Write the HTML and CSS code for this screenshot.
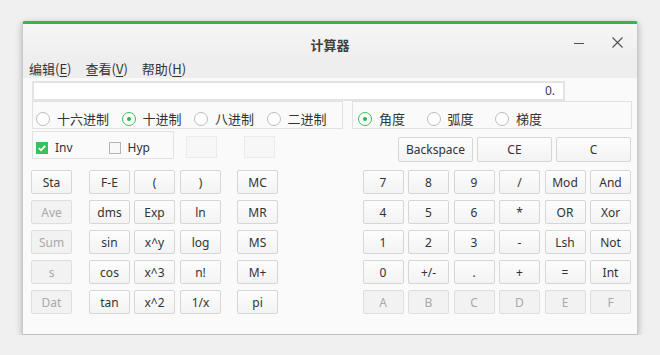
FILE: index.html
```html
<!DOCTYPE html>
<html>
<head>
<meta charset="utf-8">
<title>计算器</title>
<link rel="stylesheet" href="styles.css">
</head>
<body>
<div class="window">
    <div class="titlebar">
        <span></span>
        <span class="title">计算器</span>
        <span class="controls">
            <svg width="10" height="10" viewBox="0 0 10 10"><path d="M0 5.5H10" stroke="#505050" stroke-width="1"/></svg>
            <svg width="11" height="11" viewBox="0 0 11 11"><path d="M0.5 0.5L10.5 10.5M10.5 0.5L0.5 10.5" stroke="#505050" stroke-width="1.1"/></svg>
        </span>
    </div>
    <div class="menubar">
        <span>编辑(<u>E</u>)</span>
        <span>查看(<u>V</u>)</span>
        <span>帮助(<u>H</u>)</span>
    </div>
    <div class="content">
        <div class="display">0.</div>

        <div class="modes">
            <div class="group base">
                <span class="radio"><span class="circle"></span>十六进制</span>
                <span class="radio on"><span class="circle"></span>十进制</span>
                <span class="radio"><span class="circle"></span>八进制</span>
                <span class="radio"><span class="circle"></span>二进制</span>
            </div>
            <div class="group angle">
                <span class="radio on"><span class="circle"></span>角度</span>
                <span class="radio"><span class="circle"></span>弧度</span>
                <span class="radio"><span class="circle"></span>梯度</span>
            </div>
        </div>

        <div class="options">
            <div class="checks">
                <span class="check on"><span class="box"><svg width="12" height="12" viewBox="0 0 12 12"><path d="M2.8 6.2L5 8.3L9.2 3.8" fill="none" stroke="#fff" stroke-width="1.8"/></svg></span>Inv</span>
                <span class="check"><span class="box"></span>Hyp</span>
            </div>
            <span class="blank first"></span>
            <span class="blank"></span>
            <div class="clear">
                <button class="key">Backspace</button>
                <button class="key">CE</button>
                <button class="key">C</button>
            </div>
        </div>

        <div class="keys">
            <div class="sci">
                <button class="key">Sta</button>
                <button class="key">F-E</button>
                <button class="key">(</button>
                <button class="key">)</button>
                <button class="key">MC</button>

                <button class="key off">Ave</button>
                <button class="key">dms</button>
                <button class="key">Exp</button>
                <button class="key">ln</button>
                <button class="key">MR</button>

                <button class="key off">Sum</button>
                <button class="key">sin</button>
                <button class="key">x^y</button>
                <button class="key">log</button>
                <button class="key">MS</button>

                <button class="key off">s</button>
                <button class="key">cos</button>
                <button class="key">x^3</button>
                <button class="key">n!</button>
                <button class="key">M+</button>

                <button class="key off">Dat</button>
                <button class="key">tan</button>
                <button class="key">x^2</button>
                <button class="key">1/x</button>
                <button class="key">pi</button>
            </div>
            <div class="num">
                <button class="key">7</button>
                <button class="key">8</button>
                <button class="key">9</button>
                <button class="key">/</button>
                <button class="key">Mod</button>
                <button class="key">And</button>

                <button class="key">4</button>
                <button class="key">5</button>
                <button class="key">6</button>
                <button class="key">*</button>
                <button class="key">OR</button>
                <button class="key">Xor</button>

                <button class="key">1</button>
                <button class="key">2</button>
                <button class="key">3</button>
                <button class="key">-</button>
                <button class="key">Lsh</button>
                <button class="key">Not</button>

                <button class="key">0</button>
                <button class="key">+/-</button>
                <button class="key">.</button>
                <button class="key">+</button>
                <button class="key">=</button>
                <button class="key">Int</button>

                <button class="key off">A</button>
                <button class="key off">B</button>
                <button class="key off">C</button>
                <button class="key off">D</button>
                <button class="key off">E</button>
                <button class="key off">F</button>
            </div>
        </div>
    </div>
</div>
</body>
</html>
```

FILE: styles.css
```css
/* desktop behind the window */
body {
    margin: 0;
    background-color: #f0f0f0;
    font-family: "Noto Sans", "Noto Sans CJK SC", sans-serif;
    color: #333;
}

.window {
    margin: 21px 0 0 22px;
    width: 614px;
    height: 310px;
    border-top: 3px solid #33b552;
    border-left: 1px solid #c9c9c9;
    border-right: 1px solid #c9c9c9;
    border-bottom: 1px solid #c0c0c0;
    border-radius: 3px 3px 0 0;
    background-color: #fafafa;
    box-shadow: 0 2px 7px rgba(0,0,0,0.28);
    display: flex;
    flex-direction: column;
}

/* title + menu */
.titlebar {
    height: 36px;
    display: grid;
    grid-template-columns: 1fr auto 1fr;
    align-items: center;
    background: linear-gradient(#f6f6f6, #eeeeee);
}
.title {
    font-family: "Noto Sans CJK SC", sans-serif;
    font-weight: bold;
    font-size: 13px;
    color: #404040;
    padding-top: 4px;
}
.controls {
    justify-self: end;
    display: flex;
    align-items: center;
    gap: 28px;
    padding-right: 14px;
    padding-top: 1px;
}

.menubar {
    height: 18px;
    background-color: #eeeeee;
    display: flex;
    gap: 14px;
    padding-left: 6px;
    font-family: "Noto Sans CJK SC", sans-serif;
    font-size: 13px;
    line-height: 18px;
    color: #333;
}
.menubar u {
    text-underline-offset: 2px;
}

.content {
    flex: 1;
    padding: 3px 5px 0 9px;
}

/* read-out */
.display {
    width: 533px;
    height: 20px;
    box-sizing: border-box;
    border: 2px solid #e3e3e3;
    background-color: #fff;
    text-align: right;
    font-size: 12px;
    line-height: 15px;
    padding-right: 8px;
    color: #3a3a5a;
}

/* base & angle radios */
.modes {
    display: flex;
    gap: 9px;
}
.group {
    height: 28px;
    box-sizing: border-box;
    border: 1px solid #e2e2e2;
    display: flex;
    align-items: center;
    padding-top: 7px;
    font-family: "Noto Sans CJK SC", sans-serif;
    font-size: 13px;
    color: #333;
}
.base {
    width: 311px;
    padding-left: 3px;
    gap: 12.5px;
}
.angle {
    flex: 1;
    padding-left: 5px;
    gap: 21.5px;
}
.radio {
    display: flex;
    align-items: center;
    gap: 7px;
}
.circle {
    width: 14px;
    height: 14px;
    box-sizing: border-box;
    border: 1px solid #bcbcbc;
    border-radius: 50%;
    background-color: #fff;
    display: flex;
    align-items: center;
    justify-content: center;
}
.radio.on .circle {
    border-color: #3bbd58;
}
.radio.on .circle::after {
    content: "";
    width: 4px;
    height: 4px;
    border-radius: 50%;
    background-color: #2fb24e;
}

/* inv / hyp / clear row */
.options {
    display: flex;
    align-items: flex-start;
    height: 41px;
}
.checks {
    margin-top: 2px;
    width: 142px;
    height: 28px;
    box-sizing: border-box;
    border: 1px solid #e2e2e2;
    display: flex;
    align-items: center;
    padding: 5px 0 0 3px;
    gap: 36px;
    font-size: 12px;
}
.check {
    display: flex;
    align-items: center;
    gap: 7px;
}
.box {
    width: 12px;
    height: 12px;
    box-sizing: border-box;
    border: 1px solid #b5b5b5;
    background-color: #f8f8f8;
    display: flex;
}
.check.on .box {
    border: none;
    background-color: #3ac05c;
}
.blank {
    margin-top: 7px;
    margin-left: 27px;
    width: 31px;
    height: 22px;
    box-sizing: border-box;
    border: 1px solid #ebebeb;
    background-color: #f7f7f7;
}
.blank.first {
    margin-left: 12px;
}
.clear {
    margin-left: auto;
    margin-top: 8px;
    margin-right: 1px;
    display: flex;
    gap: 4px;
}
.clear .key {
    width: 75px;
    height: 25px;
}

/* buttons */
.key {
    width: 41px;
    height: 24px;
    padding: 0;
    border: 1px solid #d6d6d6;
    border-radius: 2px;
    background: linear-gradient(#fdfdfd, #f3f3f3);
    font-family: "Noto Sans", sans-serif;
    font-size: 12px;
    color: #333;
}
.key.off {
    color: #a9a9a9;
    background: #f2f2f2;
    border-color: #dedede;
}

.keys {
    display: flex;
    justify-content: space-between;
    margin-left: -1px;
    margin-right: 1px;
}
.sci {
    display: grid;
    grid-template-columns: 58px 45px 46px 57px 41px;
    row-gap: 6px;
}
.num {
    display: grid;
    grid-template-columns: repeat(6, 41px);
    column-gap: 4.5px;
    row-gap: 6px;
}
```
